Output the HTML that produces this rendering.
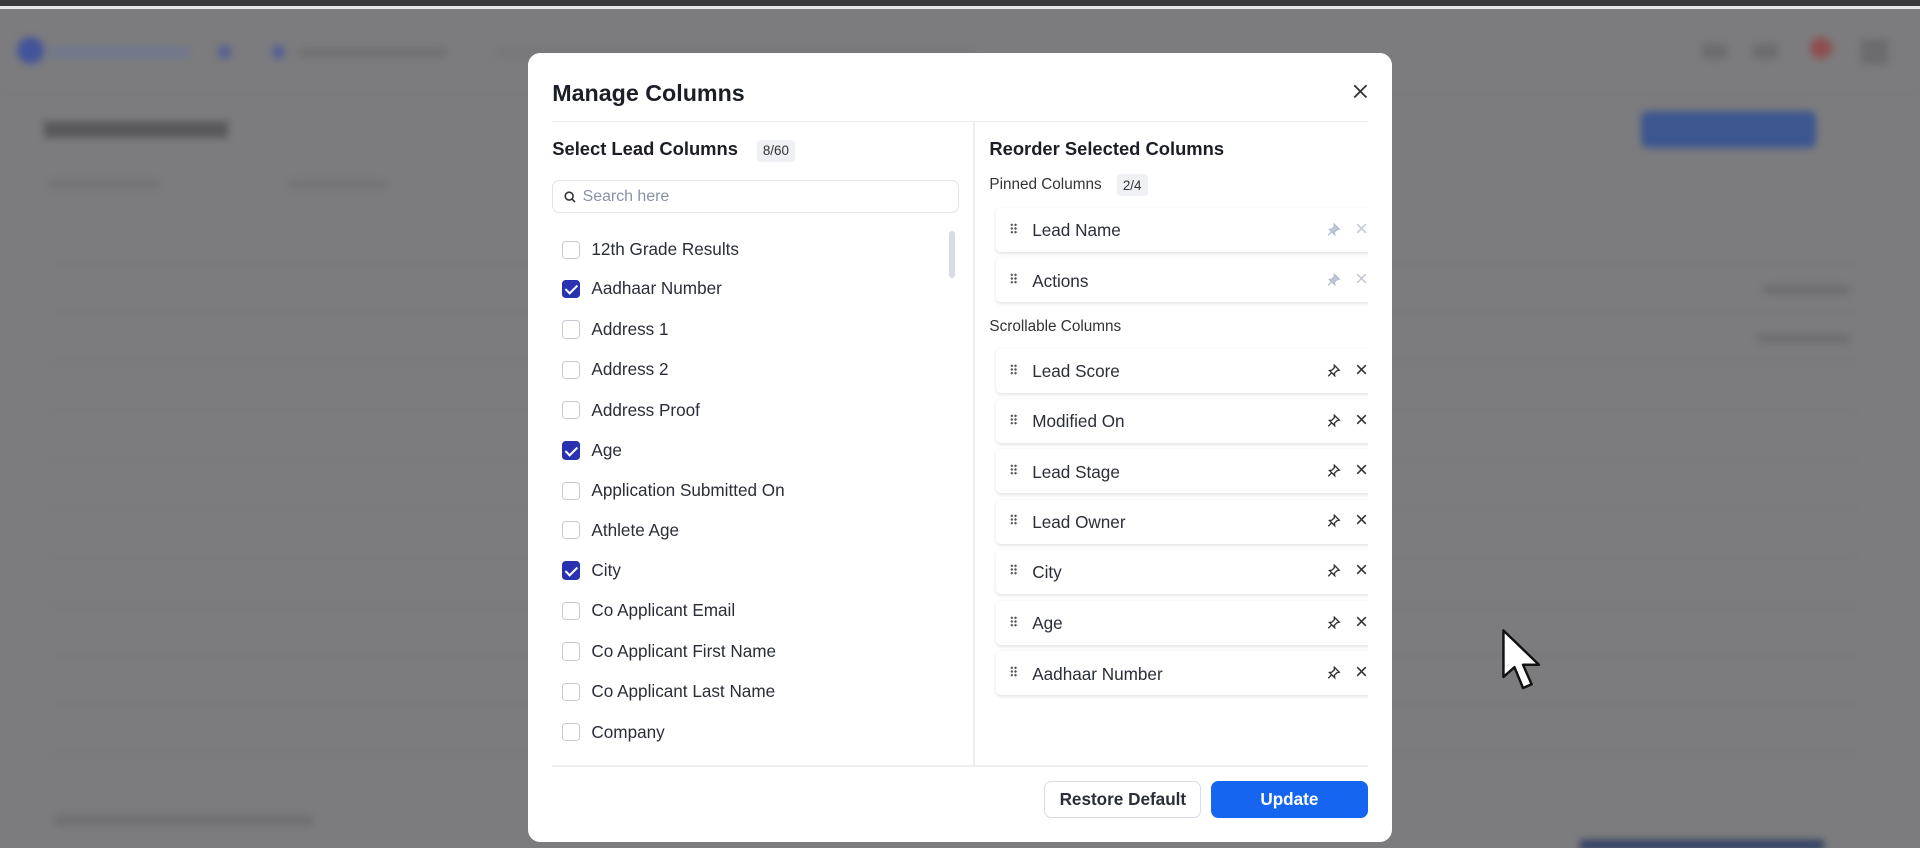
<!DOCTYPE html>
<html><head><meta charset="utf-8"><style>
*{box-sizing:border-box;margin:0;padding:0}
html,body{width:1920px;height:848px;overflow:hidden}
body{background:#7c7c7e;font-family:"Liberation Sans",sans-serif;color:#1f2430}
#w{zoom:1.22449;width:1568px;height:693px;position:relative;overflow:hidden}
.a{position:absolute}
.bl{filter:blur(3px)}
.modal{left:431px;top:43px;width:706px;height:645px;background:#fff;border-radius:10px}
.title{left:20px;top:22px;font-size:19px;font-weight:bold;color:#1b1e26}
.hd{font-size:15px;font-weight:bold;color:#1b1e26}
.badge{background:#eef0f4;border-radius:3px;font-size:11px;color:#333;padding:3px 5px}
.item{left:28px;font-size:14px;color:#2a2e38;display:flex;align-items:center;height:20px}
.cb{width:15px;height:15px;border:1px solid #c6cad3;border-radius:3px;margin-right:9px;background:#fff}
.cb.on{background:#2933b0;border-color:#2933b0;position:relative}
.cb.on:after{content:"";position:absolute;left:4px;top:1px;width:4px;height:8px;border:solid #fff;border-width:0 2px 2px 0;transform:rotate(45deg)}
.card{left:382px;width:320px;height:36px;background:#fff;border-radius:4px;box-shadow:0 1px 3px rgba(0,0,0,.12);font-size:14px;color:#2a2e38}
.card .t{position:absolute;left:30px;top:10px}
.card .d{position:absolute;left:12px;top:12px;width:6px;height:9px;background:radial-gradient(circle,#555 0.9px,transparent 1.1px) 0 0/3px 3px}
.card .p{position:absolute;left:271px;top:12px}
.card .x{position:absolute;left:294px;top:12px}
.row{left:40px;width:1480px;height:1px;background:#777}
</style></head><body><div id="w">
<div class="a" style="left:0;top:0;width:1568px;height:5px;background:#3a3a3c"></div>
<div class="a" style="left:0;top:5px;width:1568px;height:2px;background:#e8e8e8"></div>
<div class="bl">
<div class="a" style="left:0;top:76px;width:1568px;height:1px;background:#747476"></div>
<div class="a" style="left:14px;top:30px;width:22px;height:22px;border-radius:50%;background:#44549a"></div>
<div class="a" style="left:40px;top:38px;width:115px;height:9px;background:#72788e"></div>
<div class="a" style="left:178px;top:37px;width:11px;height:11px;border-radius:50%;background:#555f95"></div>
<div class="a" style="left:222px;top:37px;width:11px;height:11px;border-radius:50%;background:#555f95"></div>
<div class="a" style="left:244px;top:40px;width:120px;height:6px;background:#6e6e70"></div>
<div class="a" style="left:404px;top:40px;width:390px;height:6px;background:#767678"></div>
<div class="a" style="left:36px;top:99px;width:150px;height:14px;background:#5a5a5c"></div>
<div class="a" style="left:40px;top:147px;width:90px;height:7px;background:#737375"></div>
<div class="a" style="left:235px;top:147px;width:80px;height:7px;background:#737375"></div>
<div class="a" style="left:1340px;top:91px;width:143px;height:30px;border-radius:6px;background:#3c5690"></div>
<div class="a" style="left:1290px;top:686px;width:200px;height:8px;background:#2f4064"></div>
<div class="a" style="left:1390px;top:36px;width:20px;height:12px;background:#6c6c6e"></div>
<div class="a" style="left:1432px;top:36px;width:20px;height:12px;background:#6c6c6e"></div>
<div class="a" style="left:1520px;top:32px;width:22px;height:20px;background:#6c6c6e"></div>
<div class="a" style="left:1478px;top:30px;width:18px;height:18px;border-radius:50%;background:#8f5050"></div>
<div class="a row" style="top:215px"></div><div class="a row" style="top:255px"></div><div class="a row" style="top:295px"></div><div class="a row" style="top:335px"></div><div class="a row" style="top:375px"></div><div class="a row" style="top:415px"></div><div class="a row" style="top:455px"></div><div class="a row" style="top:495px"></div><div class="a row" style="top:535px"></div><div class="a row" style="top:575px"></div><div class="a row" style="top:615px"></div>
<div class="a" style="left:1440px;top:233px;width:70px;height:7px;background:#6e6e70"></div>
<div class="a" style="left:1435px;top:273px;width:75px;height:7px;background:#6e6e70"></div>
<div class="a" style="left:45px;top:666px;width:210px;height:8px;background:#6e6e70"></div>
</div>
<div class="a modal">
<div class="a title">Manage Columns</div>
<svg class="a" style="left:674px;top:26px" width="12" height="12" viewBox="0 0 12 12"><path d="M1 1L11 11M11 1L1 11" stroke="#333" stroke-width="1.5"/></svg>
<div class="a" style="left:20px;top:56px;width:666px;height:1px;background:#eceef2"></div>
<div class="a" style="left:364px;top:57px;width:1px;height:525px;background:#eceef2"></div>
<div class="a" style="left:20px;top:582px;width:666px;height:1px;background:#eceef2"></div>
<div class="a hd" style="left:20px;top:70px">Select Lead Columns</div>
<div class="a badge" style="left:187px;top:71px">8/60</div>
<div class="a" style="left:20px;top:104px;width:332px;height:27px;border:1px solid #e0e3ea;border-radius:6px">
<svg class="a" style="left:9px;top:8px" width="10" height="10" viewBox="0 0 10 10"><circle cx="4.2" cy="4.2" r="3.2" fill="none" stroke="#333" stroke-width="1.3"/><path d="M6.6 6.6L9 9" stroke="#333" stroke-width="1.3"/></svg>
<span class="a" style="left:24px;top:6px;font-size:13px;color:#8a93a6">Search here</span></div>
<div class="a" style="left:344px;top:146px;width:5px;height:38px;border-radius:3px;background:#d8dbe2"></div>
<div class="a item" style="top:151px"><div class="cb"></div>12th Grade Results</div>
<div class="a item" style="top:183px"><div class="cb on"></div>Aadhaar Number</div>
<div class="a item" style="top:216px"><div class="cb"></div>Address 1</div>
<div class="a item" style="top:249px"><div class="cb"></div>Address 2</div>
<div class="a item" style="top:282px"><div class="cb"></div>Address Proof</div>
<div class="a item" style="top:315px"><div class="cb on"></div>Age</div>
<div class="a item" style="top:348px"><div class="cb"></div>Application Submitted On</div>
<div class="a item" style="top:380px"><div class="cb"></div>Athlete Age</div>
<div class="a item" style="top:413px"><div class="cb on"></div>City</div>
<div class="a item" style="top:446px"><div class="cb"></div>Co Applicant Email</div>
<div class="a item" style="top:479px"><div class="cb"></div>Co Applicant First Name</div>
<div class="a item" style="top:512px"><div class="cb"></div>Co Applicant Last Name</div>
<div class="a item" style="top:545px"><div class="cb"></div>Company</div>
<div class="a hd" style="left:377px;top:70px">Reorder Selected Columns</div>
<div class="a" style="left:377px;top:101px;font-size:12.5px;color:#333">Pinned Columns</div>
<div class="a badge" style="left:481px;top:99px">2/4</div>
<div class="a" style="left:377px;top:217px;font-size:12.5px;color:#333">Scrollable Columns</div>
<div class="a" style="left:686px;top:120px;width:20px;height:460px;background:#fff;z-index:2"></div>
<div class="a card" style="top:127px"><div class="d"></div><span class="t">Lead Name</span><svg class="p" width="11" height="11" viewBox="0 0 11 11"><path d="M6 1l4 4-2 .6-2 2 .3 2L2 5.3l2-.3 2-2z M1 10l3-3" fill="#c0c7d6" stroke="#b5bdd0" stroke-width="1.1"/></svg><svg class="x" width="9" height="9" viewBox="0 0 9 9"><path d="M1 1L8 8M8 1L1 8" stroke="#c5cad6" stroke-width="1.3"/></svg></div>
<div class="a card" style="top:168px"><div class="d"></div><span class="t">Actions</span><svg class="p" width="11" height="11" viewBox="0 0 11 11"><path d="M6 1l4 4-2 .6-2 2 .3 2L2 5.3l2-.3 2-2z M1 10l3-3" fill="#c0c7d6" stroke="#b5bdd0" stroke-width="1.1"/></svg><svg class="x" width="9" height="9" viewBox="0 0 9 9"><path d="M1 1L8 8M8 1L1 8" stroke="#c5cad6" stroke-width="1.3"/></svg></div>
<div class="a card" style="top:242px"><div class="d"></div><span class="t">Lead Score</span><svg class="p" width="11" height="11" viewBox="0 0 11 11"><path d="M6 1l4 4-2 .6-2 2 .3 2L2 5.3l2-.3 2-2z M1 10l3-3" fill="none" stroke="#333" stroke-width="1.1"/></svg><svg class="x" width="9" height="9" viewBox="0 0 9 9"><path d="M1 1L8 8M8 1L1 8" stroke="#333" stroke-width="1.3"/></svg></div>
<div class="a card" style="top:283px"><div class="d"></div><span class="t">Modified On</span><svg class="p" width="11" height="11" viewBox="0 0 11 11"><path d="M6 1l4 4-2 .6-2 2 .3 2L2 5.3l2-.3 2-2z M1 10l3-3" fill="none" stroke="#333" stroke-width="1.1"/></svg><svg class="x" width="9" height="9" viewBox="0 0 9 9"><path d="M1 1L8 8M8 1L1 8" stroke="#333" stroke-width="1.3"/></svg></div>
<div class="a card" style="top:324px"><div class="d"></div><span class="t">Lead Stage</span><svg class="p" width="11" height="11" viewBox="0 0 11 11"><path d="M6 1l4 4-2 .6-2 2 .3 2L2 5.3l2-.3 2-2z M1 10l3-3" fill="none" stroke="#333" stroke-width="1.1"/></svg><svg class="x" width="9" height="9" viewBox="0 0 9 9"><path d="M1 1L8 8M8 1L1 8" stroke="#333" stroke-width="1.3"/></svg></div>
<div class="a card" style="top:365px"><div class="d"></div><span class="t">Lead Owner</span><svg class="p" width="11" height="11" viewBox="0 0 11 11"><path d="M6 1l4 4-2 .6-2 2 .3 2L2 5.3l2-.3 2-2z M1 10l3-3" fill="none" stroke="#333" stroke-width="1.1"/></svg><svg class="x" width="9" height="9" viewBox="0 0 9 9"><path d="M1 1L8 8M8 1L1 8" stroke="#333" stroke-width="1.3"/></svg></div>
<div class="a card" style="top:406px"><div class="d"></div><span class="t">City</span><svg class="p" width="11" height="11" viewBox="0 0 11 11"><path d="M6 1l4 4-2 .6-2 2 .3 2L2 5.3l2-.3 2-2z M1 10l3-3" fill="none" stroke="#333" stroke-width="1.1"/></svg><svg class="x" width="9" height="9" viewBox="0 0 9 9"><path d="M1 1L8 8M8 1L1 8" stroke="#333" stroke-width="1.3"/></svg></div>
<div class="a card" style="top:448px"><div class="d"></div><span class="t">Age</span><svg class="p" width="11" height="11" viewBox="0 0 11 11"><path d="M6 1l4 4-2 .6-2 2 .3 2L2 5.3l2-.3 2-2z M1 10l3-3" fill="none" stroke="#333" stroke-width="1.1"/></svg><svg class="x" width="9" height="9" viewBox="0 0 9 9"><path d="M1 1L8 8M8 1L1 8" stroke="#333" stroke-width="1.3"/></svg></div>
<div class="a card" style="top:489px"><div class="d"></div><span class="t">Aadhaar Number</span><svg class="p" width="11" height="11" viewBox="0 0 11 11"><path d="M6 1l4 4-2 .6-2 2 .3 2L2 5.3l2-.3 2-2z M1 10l3-3" fill="none" stroke="#333" stroke-width="1.1"/></svg><svg class="x" width="9" height="9" viewBox="0 0 9 9"><path d="M1 1L8 8M8 1L1 8" stroke="#333" stroke-width="1.3"/></svg></div>
<div class="a" style="left:422px;top:595px;width:128px;height:30px;border:1px solid #d9dce3;border-radius:6px;font-size:14px;font-weight:bold;color:#2a2e38;text-align:center;line-height:28px">Restore Default</div>
<div class="a" style="left:558px;top:595px;width:128px;height:30px;background:#1565f0;border-radius:6px;font-size:14px;font-weight:bold;color:#fff;text-align:center;line-height:30px">Update</div>
</div>
<svg class="a" style="left:1226px;top:513px" width="38" height="54" viewBox="0 0 38 54"><path d="M2 2 L2 40 L11 32 L18 49 L25 46 L18 30 L31 30 Z" fill="#fff" stroke="#111" stroke-width="2" stroke-linejoin="round"/></svg>
</div></body></html>
